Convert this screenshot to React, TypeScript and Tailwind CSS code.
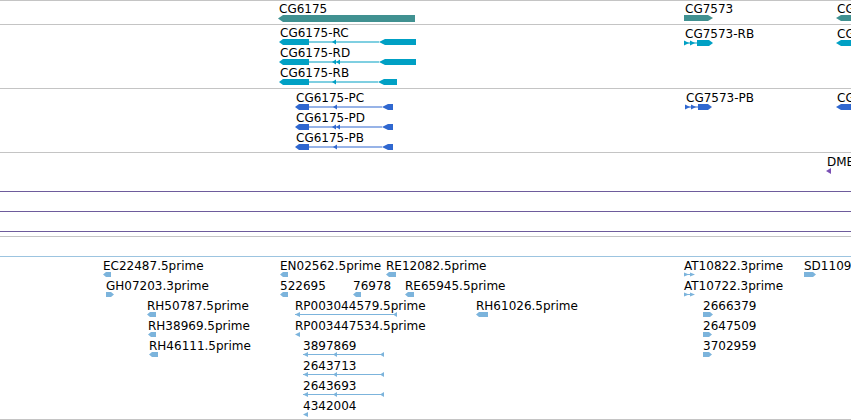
import React from "react";

const COLORS = {
  gene: "#409191",
  tx: "#00a0c4",
  pr: "#3068d0",
  est: "#7cb4dc",
  dme: "#7a50b4",
};

type Feature = {
  x: number;
  y: number;
  label?: string;
  w: number;
  h: number;
  gx?: number;
  draw: (w: number, h: number) => React.ReactNode;
};

// glyph drawings
const barLeft = (c: string) => (w: number, h: number) => (
  <polygon points={`0,${h / 2} 5,0 ${w},0 ${w},${h} 5,${h}`} fill={c} />
);

const barRight = (c: string) => (w: number, h: number) => (
  <polygon points={`0,0 ${w - 5},0 ${w},${h / 2} ${w - 5},${h} 0,${h}`} fill={c} />
);

const estLeft = (c: string) => (w: number, h: number) => (
  <polygon points={`0,${h / 2} 3,0 ${w},0 ${w},${h} 3,${h}`} fill={c} />
);

const estRight = (c: string) => (w: number, h: number) => (
  <polygon points={`0,0 ${w - 3},0 ${w},${h / 2} ${w - 3},${h} 0,${h}`} fill={c} />
);

const tri = (c: string) => (w: number, h: number) => (
  <polygon points={`0,${h / 2} ${w},0 ${w},${h}`} fill={c} />
);

const chevrons = (c: string) => (w: number, h: number) => (
  <g fill={c}>
    <rect x={0} y={h / 2 - 0.5} width={w - 2} height={1} />
    <polygon points={`0,0.5 5,${h / 2} 0,${h - 0.5}`} />
    <polygon points={`6,0.5 11,${h / 2} 6,${h - 0.5}`} />
  </g>
);

// reverse strand transcript: left exon, intron line with arrows, right exon
const spliced =
  (c: string, le: number, rs: number, arrows: number[]) =>
  (w: number, h: number) => {
    const m = h / 2;
    return (
      <g fill={c}>
        <polygon points={`0,${m} 4,0 ${le},0 ${le},${h} 4,${h}`} />
        <rect x={le} y={m - 0.5} width={rs - le} height={1} />
        {arrows.map((a) => (
          <polygon key={a} points={`${a},${m} ${a + 4},0.5 ${a + 4},${h - 0.5}`} />
        ))}
        <polygon points={`${rs},${m} ${rs + 6},0 ${w},0 ${w},${h} ${rs + 6},${h}`} />
      </g>
    );
  };

// forward strand short transcript
const fwdTx = (c: string) => (w: number, h: number) => {
  const m = h / 2;
  return (
    <g fill={c}>
      <rect x={0} y={m - 0.5} width={14} height={1} />
      <polygon points={`0,0.5 5,${m} 0,${h - 0.5}`} />
      <polygon points={`6,0.5 11,${m} 6,${h - 0.5}`} />
      <polygon points={`13,0 ${w - 4},0 ${w},${m} ${w - 4},${h} 13,${h}`} />
    </g>
  );
};

// EST alignment with gaps, reverse strand
const estSpliced =
  (c: string, arrows: number[]) => (w: number, h: number) => {
    const m = h / 2;
    return (
      <g fill={c}>
        <rect x={0} y={m - 0.5} width={w} height={1} />
        <polygon points={`0,${m} 5,0 5,${h}`} />
        {arrows.map((a) => (
          <polygon key={a} points={`${a},${m} ${a + 4},0 ${a + 4},${h}`} />
        ))}
        <polygon points={`${w - 4},${m} ${w},0 ${w},${h}`} />
      </g>
    );
  };

const geneTrack: Feature[] = [
  { x: 278, y: 2, label: "CG6175", w: 137, h: 7, draw: barLeft(COLORS.gene) },
  { x: 684, y: 2, label: "CG7573", w: 29, h: 6, draw: barRight(COLORS.gene) },
  { x: 836, y: 2, label: "CG7572", w: 30, h: 6, draw: barLeft(COLORS.gene) },
];

const txTrack: Feature[] = [
  { x: 279, y: 2, label: "CG6175-RC", w: 137, h: 6, draw: spliced(COLORS.tx, 30, 100, [53]) },
  { x: 279, y: 22, label: "CG6175-RD", w: 137, h: 6, draw: spliced(COLORS.tx, 30, 100, [53, 57]) },
  { x: 279, y: 42, label: "CG6175-RB", w: 118, h: 6, draw: spliced(COLORS.tx, 30, 99, [53]) },
  { x: 684, y: 3, label: "CG7573-RB", w: 29, h: 6, draw: fwdTx(COLORS.tx) },
  { x: 836, y: 3, label: "CG7572-RA", w: 30, h: 6, draw: barLeft(COLORS.tx) },
];

const prTrack: Feature[] = [
  { x: 295, y: 3, label: "CG6175-PC", w: 98, h: 6, draw: spliced(COLORS.pr, 14, 87, [38]) },
  { x: 295, y: 23, label: "CG6175-PD", w: 98, h: 6, draw: spliced(COLORS.pr, 14, 87, [37, 41]) },
  { x: 295, y: 43, label: "CG6175-PB", w: 98, h: 6, draw: spliced(COLORS.pr, 14, 87, [38]) },
  { x: 685, y: 3, label: "CG7573-PB", w: 27, h: 6, draw: fwdTx(COLORS.pr) },
  { x: 836, y: 3, label: "CG7572-PA", w: 30, h: 6, draw: barLeft(COLORS.pr) },
];

const dmeTrack: Feature[] = [
  { x: 826, y: 3, label: "DME", w: 5, h: 6, draw: tri(COLORS.dme) },
];

const row = (r: number) => 3 + r * 20;

const estTrack: Feature[] = [
  { x: 103, y: row(0), label: "EC22487.5prime", w: 8, h: 5, draw: estLeft(COLORS.est) },
  { x: 280, y: row(0), label: "EN02562.5prime", w: 8, h: 5, draw: estLeft(COLORS.est) },
  { x: 386, y: row(0), label: "RE12082.5prime", w: 10, h: 5, draw: estLeft(COLORS.est) },
  { x: 684, y: row(0), label: "AT10822.3prime", w: 12, h: 5, draw: chevrons(COLORS.est) },
  { x: 804, y: row(0), label: "SD11093.5prime", w: 12, h: 5, draw: estRight(COLORS.est) },

  { x: 106, y: row(1), label: "GH07203.3prime", w: 8, h: 5, draw: estRight(COLORS.est) },
  { x: 280, y: row(1), label: "522695", w: 8, h: 5, draw: estLeft(COLORS.est) },
  { x: 353, y: row(1), label: "76978", w: 8, h: 5, draw: estLeft(COLORS.est) },
  { x: 405, y: row(1), label: "RE65945.5prime", w: 9, h: 5, draw: estLeft(COLORS.est) },
  { x: 684, y: row(1), label: "AT10722.3prime", w: 11, h: 5, draw: chevrons(COLORS.est) },

  { x: 147, y: row(2), label: "RH50787.5prime", w: 9, h: 5, draw: estLeft(COLORS.est) },
  { x: 295, y: row(2), label: "RP003044579.5prime", w: 102, h: 5, draw: estSpliced(COLORS.est, []) },
  { x: 476, y: row(2), label: "RH61026.5prime", w: 12, h: 5, draw: estLeft(COLORS.est) },
  { x: 703, y: row(2), label: "2666379", w: 10, h: 5, draw: estRight(COLORS.est) },

  { x: 148, y: row(3), label: "RH38969.5prime", w: 8, h: 5, draw: estLeft(COLORS.est) },
  { x: 295, y: row(3), label: "RP003447534.5prime", w: 5, h: 5, draw: tri(COLORS.est) },
  { x: 703, y: row(3), label: "2647509", w: 9, h: 5, draw: estRight(COLORS.est) },

  { x: 149, y: row(4), label: "RH46111.5prime", w: 9, h: 5, draw: estLeft(COLORS.est) },
  { x: 303, y: row(4), label: "3897869", w: 81, h: 5, draw: estSpliced(COLORS.est, [30]) },
  { x: 703, y: row(4), label: "3702959", w: 9, h: 5, draw: estRight(COLORS.est) },

  { x: 303, y: row(5), label: "2643713", w: 81, h: 5, draw: estSpliced(COLORS.est, [30]) },
  { x: 303, y: row(6), label: "2643693", w: 81, h: 5, draw: estSpliced(COLORS.est, [30]) },
  { x: 303, y: row(7), label: "4342004", w: 5, h: 5, draw: tri(COLORS.est) },
];

const FeatureGlyph = ({ f, pad }: { f: Feature; pad: boolean }) => (
  <div className="absolute flex flex-col" style={{ left: f.x, top: f.y }}>
    <div
      className={`h-[12px] whitespace-nowrap text-[12px] leading-[12px] text-black ${
        pad ? "pl-[1px]" : "pl-0"
      }`}
    >
      {f.label}
    </div>
    <svg width={f.w} height={f.h} className="block">
      {f.draw(f.w, f.h)}
    </svg>
  </div>
);

const Track = ({
  height,
  border,
  features = [],
  pad = true,
}: {
  height: string;
  border: string;
  features?: Feature[];
  pad?: boolean;
}) => (
  <div className={`relative w-full shrink-0 overflow-hidden border-t ${height} ${border}`}>
    {features.map((f, i) => (
      <FeatureGlyph key={i} f={f} pad={pad} />
    ))}
  </div>
);

const App = () => {
  return (
    <div className="h-[420px] w-[851px] overflow-hidden bg-white font-['DejaVu_Sans',sans-serif]">
      <div className="flex flex-col">
        <Track height="h-[24px]" border="border-[#c4c4c4]" features={geneTrack} />
        <Track height="h-[64px]" border="border-[#c4c4c4]" features={txTrack} />
        <Track height="h-[64px]" border="border-[#c4c4c4]" features={prTrack} />
        <Track height="h-[39px]" border="border-[#c4c4c4]" features={dmeTrack} />
        <Track height="h-[20px]" border="border-[#6e5c9c]" />
        <Track height="h-[20px]" border="border-[#6e5c9c]" />
        <Track height="h-[5px]" border="border-[#6e5c9c]" />
        <Track height="h-[20px]" border="border-[#c4c4c4]" />
        <Track height="h-[163px]" border="border-[#9cc4e0]" features={estTrack} pad={false} />
        <Track height="h-[1px]" border="border-[#c4c4c4]" />
      </div>
    </div>
  );
};

export default App;
